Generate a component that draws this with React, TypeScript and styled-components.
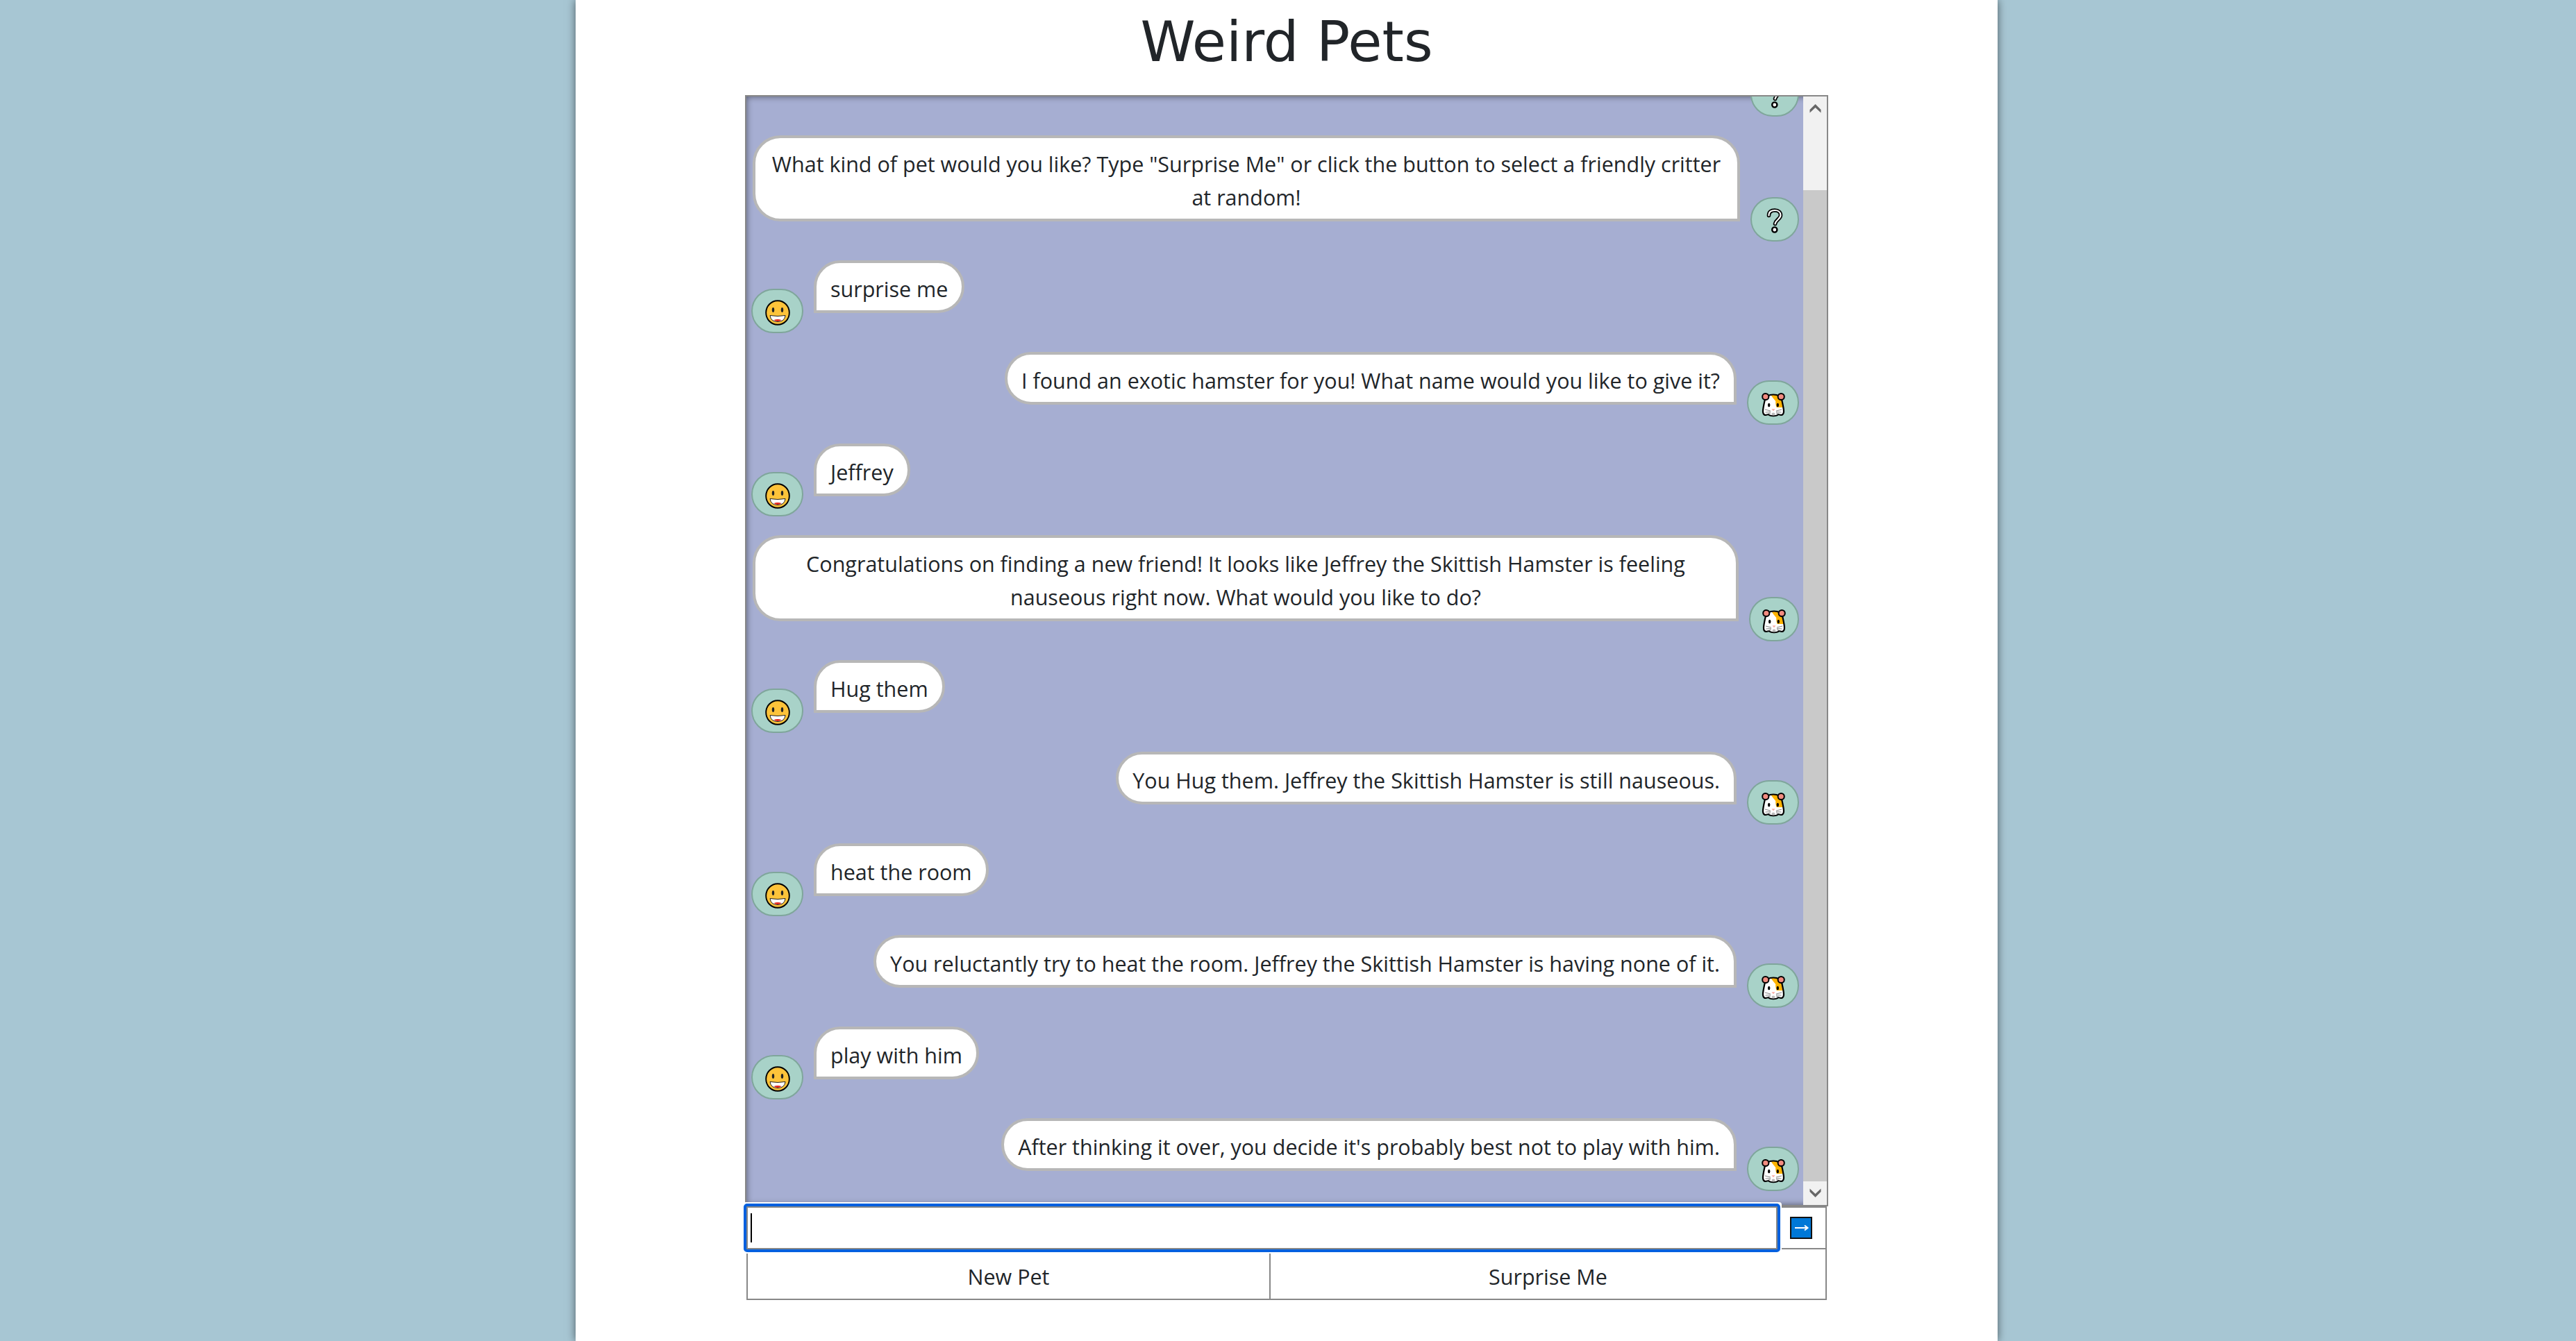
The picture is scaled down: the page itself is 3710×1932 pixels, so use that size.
import React from 'react';
import styled, { createGlobalStyle } from 'styled-components';

const GlobalStyle = createGlobalStyle`
  html, body {
    margin: 0;
    padding: 0;
    background: #a7c6d3;
  }
  * {
    box-sizing: border-box;
  }
`;

const Panel = styled.div`
  width: 2048px;
  height: 1932px;
  margin-left: 829px;
  background: #ffffff;
  box-shadow: 0 0 12px rgba(0, 0, 0, 0.55);
  overflow: hidden;
  font-family: 'Open Sans', 'Noto Sans', sans-serif;
  font-size: 30.5px;
  color: #212529;
`;

const Title = styled.h1`
  margin: 0;
  height: 137px;
  padding-top: 13px;
  text-align: center;
  font-family: 'DejaVu Sans', sans-serif;
  font-size: 80px;
  font-weight: 400;
  line-height: 96px;
`;

const Game = styled.div`
  width: 1560px;
  margin: 0 auto;
`;

const ChatBox = styled.div`
  display: flex;
  height: 1601px;
  border: 2px solid #888888;
  background: #a6aed2;
  box-shadow: inset 0 0 10px rgba(0, 0, 0, 0.5);
`;

const Messages = styled.div`
  flex: 1;
  min-width: 0;
  display: flex;
  flex-direction: column;
  justify-content: flex-end;
  gap: 27px;
  padding: 0 6px 20px 7px;
  overflow: hidden;
`;

const Row = styled.div<{ $fromUser?: boolean }>`
  flex: none;
  display: flex;
  align-items: flex-end;
  gap: 15px;
  justify-content: ${(props) => (props.$fromUser ? 'flex-start' : 'flex-end')};
`;

const Bubble = styled.div<{ $fromUser?: boolean; $wide?: boolean }>`
  flex: ${(props) => (props.$wide ? 1 : 'none')};
  margin-left: ${(props) => (props.$wide ? '2px' : 0)};
  margin-bottom: 29px;
  padding: 13px 20px 7px;
  border: 4px solid #b7b7b7;
  border-radius: ${(props) => (props.$fromUser ? '40px 40px 40px 0' : '40px 40px 0 40px')};
  background: #ffffff;
  line-height: 48px;
  text-align: center;
`;

const Avatar = styled.div<{ $width?: number }>`
  flex: none;
  width: ${(props) => props.$width ?? 75}px;
  height: 64px;
  padding-top: 5px;
  display: flex;
  align-items: center;
  justify-content: center;
  border: 2px solid #7fa69b;
  border-radius: 32px;
  background: #a8d2c8;
`;

const Scrollbar = styled.div`
  flex: none;
  width: 34px;
  display: flex;
  flex-direction: column;
  background: #c9c9c9;
`;

const ScrollThumb = styled.div`
  flex: none;
  height: 135px;
  padding-top: 10px;
  display: flex;
  justify-content: center;
  align-items: flex-start;
  background: #f1f1f1;
`;

const ScrollTrack = styled.div`
  flex: 1;
`;

const ScrollButton = styled.div`
  flex: none;
  height: 34px;
  display: flex;
  justify-content: center;
  align-items: center;
  background: #f1f1f1;
`;

const InputRow = styled.div`
  display: flex;
  height: 62px;
  margin: 0 2px;
`;

const InputWrap = styled.div`
  position: relative;
  z-index: 1;
  flex: none;
  width: 1485px;
  height: 62px;
  outline: 4px solid #0060df;
  box-shadow: 0 0 0 6px #ffffff;
  border-radius: 1px;
`;

const TextInput = styled.input`
  display: block;
  width: 100%;
  height: 100%;
  padding: 0 6px;
  border: 2px solid #888888;
  background: #ffffff;
  outline: none;
  caret-color: transparent;
  font: inherit;
`;

const Caret = styled.span`
  position: absolute;
  left: 6px;
  top: 10px;
  width: 2px;
  height: 42px;
  background: #000000;
`;

const SendCell = styled.div`
  flex: 1;
  display: flex;
  align-items: center;
  justify-content: center;
  padding-right: 2px;
  border: solid #888888;
  border-width: 2px 2px 2px 0;
`;

const SendButton = styled.button`
  width: 32px;
  height: 32px;
  padding: 0;
  border: none;
  background: none;
  display: block;
`;

const ButtonRow = styled.div`
  display: flex;
  height: 73px;
  margin: 0 2px;
  border: solid #888888;
  border-width: 0 2px 2px;
`;

const ActionButton = styled.button<{ $width?: number }>`
  flex: ${(props) => (props.$width ? 'none' : 1)};
  width: ${(props) => (props.$width ? `${props.$width}px` : 'auto')};
  padding: 6px 0 0;
  border: none;
  border-right: ${(props) => (props.$width ? '2px solid #888888' : 'none')};
  background: #ffffff;
  color: #212529;
  font: inherit;
`;

const SmileIcon = () => (
  <svg width="36" height="37" viewBox="0 0 36 37">
    <ellipse cx="18" cy="18.5" rx="16.8" ry="17.3" fill="#fdc33a" stroke="#000" strokeWidth="1.9" />
    <ellipse cx="11.5" cy="14.5" rx="1.7" ry="3.4" fill="#222" />
    <ellipse cx="24.5" cy="14.5" rx="1.7" ry="3.4" fill="#222" />
    <path d="M7 22.5 Q18 24.5 29 22.5 Q28 31.5 18 31.5 Q8 31.5 7 22.5 Z" fill="#fff" stroke="#222" strokeWidth="1" />
    <path d="M12.5 29 Q18 26.8 23.5 29 Q21.5 31 18 31 Q14.5 31 12.5 29 Z" fill="#e2231a" />
  </svg>
);

const QuestionIcon = () => (
  <svg width="24" height="37" viewBox="0 0 24 37">
    <g fill="none" strokeLinecap="round" strokeLinejoin="round">
      <path d="M3.5 10.5 C3.5 5 7 3 12 3 C17.5 3 20.5 6 20.5 10 C20.5 15.5 14 16 12.5 22.5" stroke="#000" strokeWidth="5.6" />
      <path d="M3.5 10.5 C3.5 5 7 3 12 3 C17.5 3 20.5 6 20.5 10 C20.5 15.5 14 16 12.5 22.5" stroke="#fff" strokeWidth="2.2" />
    </g>
    <circle cx="11.8" cy="31" r="3.6" fill="#fff" stroke="#000" strokeWidth="2.4" />
  </svg>
);

const headPath =
  'M18 3.5 C24 3.5 29 6 30.5 12.5 C31.5 17 33 24 33 27.5 C33 31 31.5 33 29 33 L25 32 C23 35 13 35 11 32 L7 33 C4.5 33 3 31 3 27.5 C3 24 4.5 17 5.5 12.5 C7 6 12 3.5 18 3.5 Z';

const HamsterIcon = () => (
  <svg width="36" height="36" viewBox="0 0 36 36">
    <path d={headPath} fill="#fff" />
    <path d="M14.3 3.8 C15.5 3.6 17 3.5 18 3.5 C24 3.5 29 6 30.5 12.5 L32.4 22 L22.6 22 C21.5 19 21 15.5 21.3 13 C19 10 16 7 14.3 3.8 Z" fill="#ffb300" />
    <path d={headPath} fill="none" stroke="#000" strokeWidth="2.2" strokeLinejoin="round" />
    <circle cx="6.8" cy="6.5" r="4.6" fill="#f28c80" stroke="#000" strokeWidth="2" />
    <circle cx="29.2" cy="6.5" r="4.6" fill="#f28c80" stroke="#000" strokeWidth="2" />
    <ellipse cx="11.7" cy="18.5" rx="1.7" ry="2.7" fill="#000" />
    <ellipse cx="24.3" cy="18.5" rx="1.7" ry="2.7" fill="#000" />
    <path d="M15.5 24.3 H20.5 L18 27.3 Z" fill="#f7a8a0" />
    <path d="M18 29.5 C15 29.5 14.5 33 18 33.5 C21.5 33 21 29.5 18 29.5 Z" fill="#bbbbbb" />
    <g stroke="#666" strokeWidth="0.8" fill="none">
      <path d="M14 27 L6 25 M14 28.5 L6.5 29 M14 30 L8 32" />
      <path d="M22 27 L30 25 M22 28.5 L29.5 29 M22 30 L28 32" />
    </g>
  </svg>
);

const ChevronUp = () => (
  <svg width="17" height="14" viewBox="0 0 17 14">
    <path d="M0.5 13.5 L0.5 9 L8.5 1 L16.5 9 L16.5 13.5 L8.5 6 Z" fill="#666666" />
  </svg>
);

const ChevronDown = () => (
  <svg width="17" height="14" viewBox="0 0 17 14">
    <path d="M0.5 0.5 L0.5 5 L8.5 13 L16.5 5 L16.5 0.5 L8.5 8 Z" fill="#666666" />
  </svg>
);

const SendIcon = () => (
  <svg width="32" height="32" viewBox="0 0 32 32">
    <rect x="1" y="1" width="30" height="30" fill="#0078d7" stroke="#111" strokeWidth="2" />
    <path d="M7 16 H25 M21 12.5 L25.5 16 L21 19.5" stroke="#fff" strokeWidth="2" fill="none" />
  </svg>
);

type Message = {
  text: React.ReactNode;
  fromUser?: boolean;
  wide?: boolean;
  avatarWidth?: number;
  question?: boolean;
};

const messages: Message[] = [
  { text: '', question: true },
  {
    text: (
      <>
        What kind of pet would you like? Type "Surprise Me" or click the button to select a friendly critter
        <br />
        at random!
      </>
    ),
    wide: true,
    question: true,
  },
  { text: 'surprise me', fromUser: true },
  { text: 'I found an exotic hamster for you! What name would you like to give it?' },
  { text: 'Jeffrey', fromUser: true },
  {
    text: (
      <>
        Congratulations on finding a new friend! It looks like Jeffrey the Skittish Hamster is feeling
        <br />
        nauseous right now. What would you like to do?
      </>
    ),
    wide: true,
    avatarWidth: 72,
  },
  { text: 'Hug them', fromUser: true },
  { text: 'You Hug them. Jeffrey the Skittish Hamster is still nauseous.' },
  { text: 'heat the room', fromUser: true },
  { text: 'You reluctantly try to heat the room. Jeffrey the Skittish Hamster is having none of it.' },
  { text: 'play with him', fromUser: true },
  { text: "After thinking it over, you decide it's probably best not to play with him." },
];

const App: React.FC = () => {
  return (
    <>
      <GlobalStyle />
      <Panel>
        <Title>Weird Pets</Title>
        <Game>
          <ChatBox>
            <Messages>
              {messages.map((message, index) => (
                <Row key={index} $fromUser={message.fromUser}>
                  {message.fromUser && (
                    <Avatar>
                      <SmileIcon />
                    </Avatar>
                  )}
                  {message.text && (
                    <Bubble $fromUser={message.fromUser} $wide={message.wide}>
                      {message.text}
                    </Bubble>
                  )}
                  {!message.fromUser && (
                    <Avatar $width={message.question ? 70 : message.avatarWidth}>
                      {message.question ? <QuestionIcon /> : <HamsterIcon />}
                    </Avatar>
                  )}
                </Row>
              ))}
            </Messages>
            <Scrollbar>
              <ScrollThumb>
                <ChevronUp />
              </ScrollThumb>
              <ScrollTrack />
              <ScrollButton>
                <ChevronDown />
              </ScrollButton>
            </Scrollbar>
          </ChatBox>
          <InputRow>
            <InputWrap>
              <TextInput type="text" aria-label="Message" />
              <Caret />
            </InputWrap>
            <SendCell>
              <SendButton aria-label="Send">
                <SendIcon />
              </SendButton>
            </SendCell>
          </InputRow>
          <ButtonRow>
            <ActionButton $width={753}>New Pet</ActionButton>
            <ActionButton>Surprise Me</ActionButton>
          </ButtonRow>
        </Game>
      </Panel>
    </>
  );
};

export default App;
